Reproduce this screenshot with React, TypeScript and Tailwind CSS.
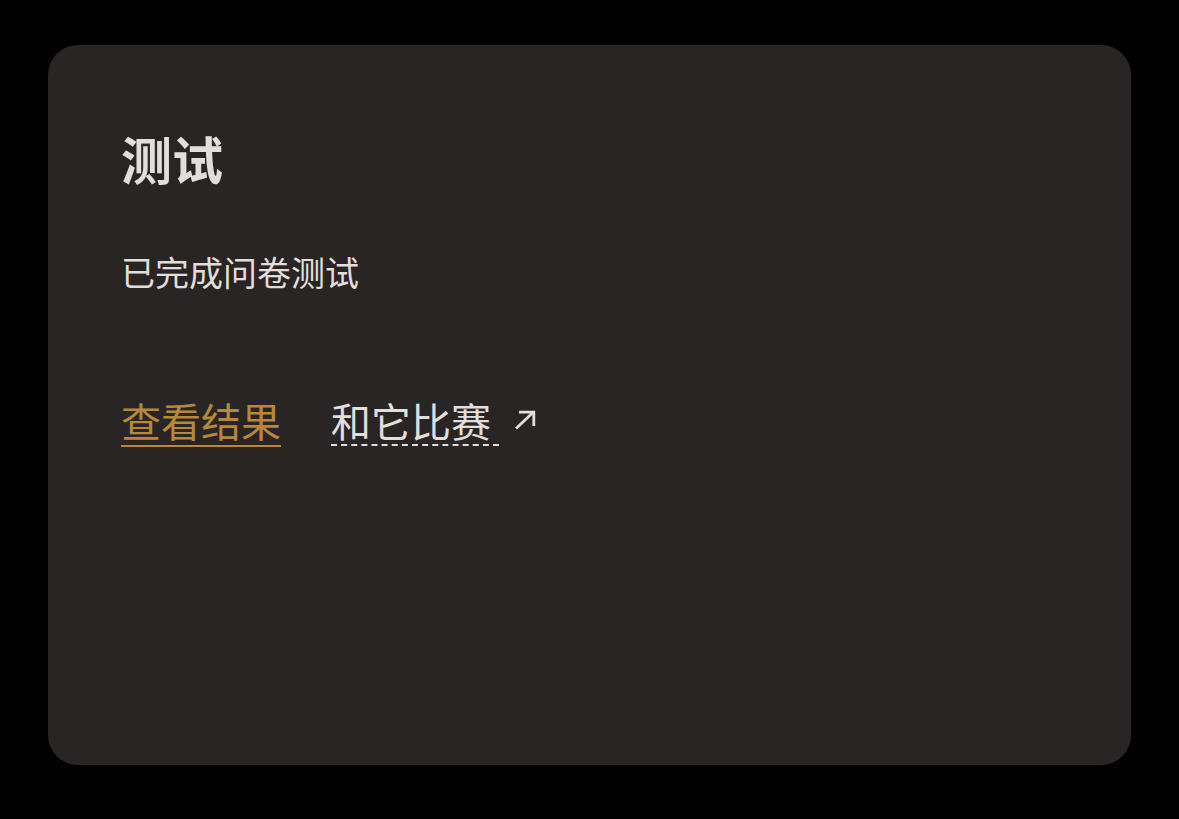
import React from "react";

function ArrowUpRight() {
  return (
    <svg
      viewBox="0 0 22 20"
      className="ml-[14px] mt-[14px] h-[20px] w-[22px] shrink-0 self-start text-[#e2dedb]"
      fill="none"
      stroke="currentColor"
      strokeWidth={2.8}
      strokeLinecap="butt"
    >
      <path d="M2 18.5 L19.5 2" />
      <path d="M5 2.2 H19.8 V16" />
    </svg>
  );
}

export default function App() {
  return (
    <div
      className="min-h-[819px] w-full bg-black px-[48px] pt-[45px] pb-[54px]"
      style={{ fontFamily: '"Noto Sans CJK SC", "Noto Sans", sans-serif' }}
    >
      <div className="flex h-[720px] flex-col rounded-[30px] bg-[#282524] px-[73px] pt-[83px]">
        <h1 className="text-[51px] font-semibold leading-[1.2] text-[#e2dedb]">测试</h1>
        <p className="mt-[63px] text-[34px] leading-[1.2] text-[#e2dedb]">已完成问卷测试</p>
        <div className="mt-[103px] flex items-start text-[40px] leading-[1.2]">
          <a
            href="#"
            className="text-[#b5883a] underline decoration-[2px] underline-offset-[8px]"
          >
            查看结果
          </a>
          <a href="#" className="ml-[50px] flex items-start text-[#e2dedb]">
            <span className="underline decoration-dashed decoration-[2px] underline-offset-[8px]">
              和它比赛&nbsp;
            </span>
            <ArrowUpRight />
          </a>
        </div>
      </div>
    </div>
  );
}
